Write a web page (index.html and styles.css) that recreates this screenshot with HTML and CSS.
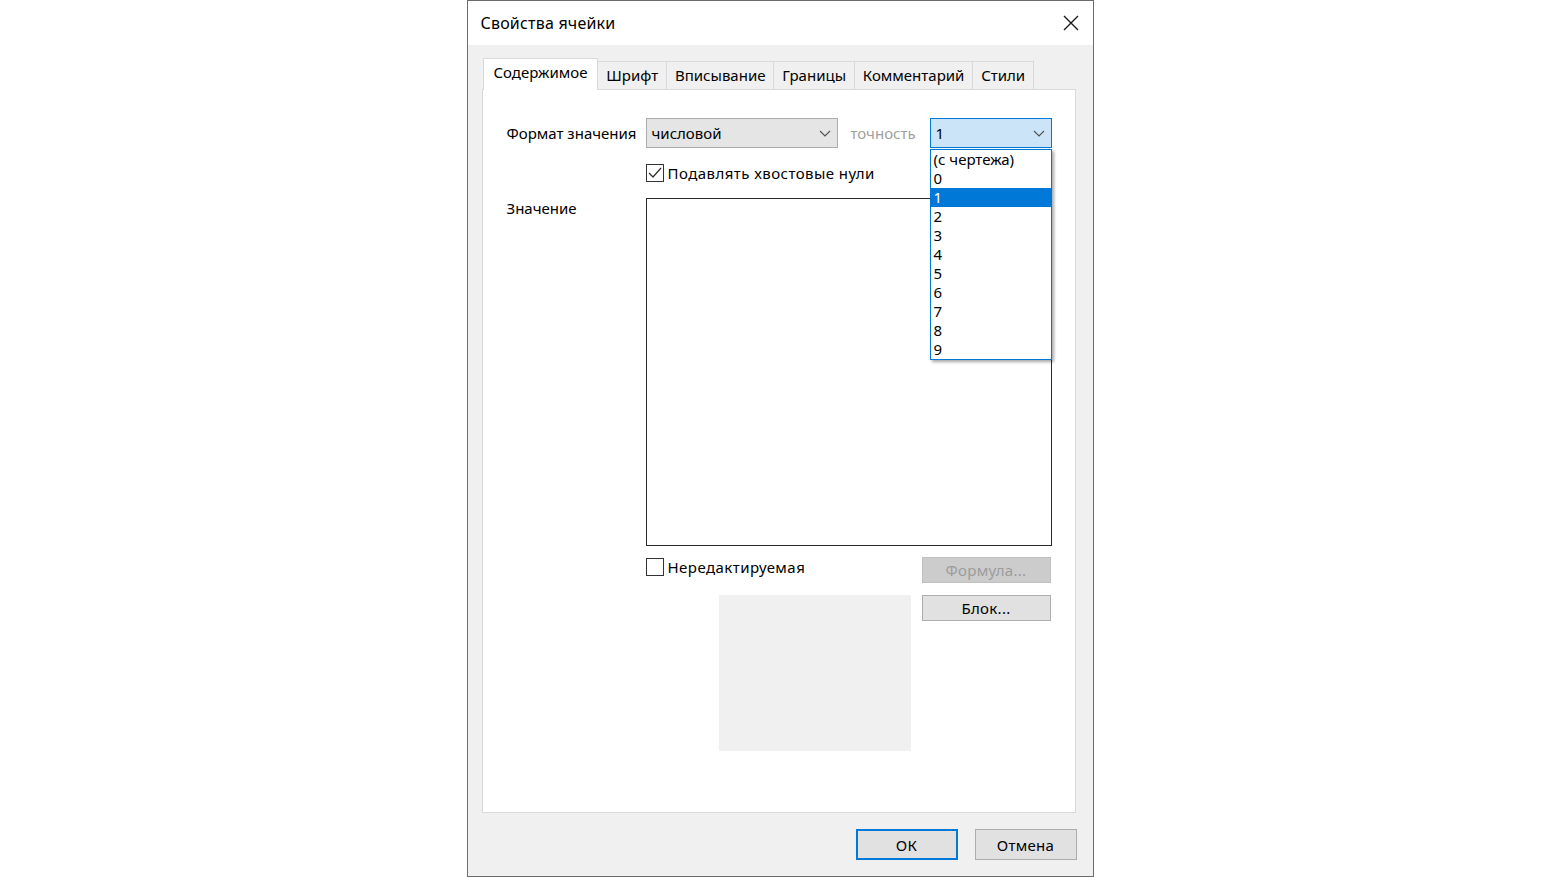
FILE: index.html
```html
<!DOCTYPE html>
<html lang="ru">
<head>
    <meta charset="UTF-8" />
    <title>Свойства ячейки</title>
    <link rel="stylesheet" href="styles.css">
</head>
<body>
    <div class="dialog">
        <div class="titlebar">
            <span class="title">Свойства ячейки</span>
            <button class="close" title="Закрыть">
                <svg width="16" height="16" viewBox="0 0 16 16">
                    <path d="M1 1 L15 15 M15 1 L1 15" stroke="#1a1a1a" stroke-width="1.4" fill="none"/>
                </svg>
            </button>
        </div>

        <div class="body">
            <div class="tabs">
                <div class="tab active">Содержимое</div>
                <div class="tab">Шрифт</div>
                <div class="tab">Вписывание</div>
                <div class="tab">Границы</div>
                <div class="tab">Комментарий</div>
                <div class="tab">Стили</div>
            </div>

            <div class="panel">
                <div class="row row-format">
                    <label class="label">Формат значения</label>
                    <div class="combo combo-format">
                        <span>числовой</span>
                        <svg class="chevron" width="12" height="7" viewBox="0 0 12 7">
                            <path d="M1 1 L6 6 L11 1" stroke="#555" stroke-width="1.2" fill="none"/>
                        </svg>
                    </div>
                    <span class="hint">точность</span>
                    <div class="combo-wrap">
                        <div class="combo combo-precision">
                            <span>1</span>
                            <svg class="chevron" width="12" height="7" viewBox="0 0 12 7">
                                <path d="M1 1 L6 6 L11 1" stroke="#555" stroke-width="1.2" fill="none"/>
                            </svg>
                        </div>
                        <ul class="dropdown">
                            <li>(с чертежа)</li>
                            <li>0</li>
                            <li class="selected">1</li>
                            <li>2</li>
                            <li>3</li>
                            <li>4</li>
                            <li>5</li>
                            <li>6</li>
                            <li>7</li>
                            <li>8</li>
                            <li>9</li>
                        </ul>
                    </div>
                </div>

                <div class="row row-check">
                    <span class="label"></span>
                    <label class="check">
                        <span class="box checked">
                            <svg width="14" height="12" viewBox="0 0 14 12">
                                <path d="M1 6 L5 10 L13 1" stroke="#333" stroke-width="1.3" fill="none"/>
                            </svg>
                        </span>
                        Подавлять хвостовые нули
                    </label>
                </div>

                <div class="row row-value">
                    <label class="label">Значение</label>
                    <div class="textarea"></div>
                </div>

                <div class="row row-options">
                    <span class="label"></span>
                    <label class="check">
                        <span class="box"></span>
                        Нередактируемая
                    </label>
                    <button class="btn disabled">Формула...</button>
                </div>

                <div class="row row-preview">
                    <span class="label"></span>
                    <div class="preview"></div>
                    <button class="btn">Блок...</button>
                </div>
            </div>

            <div class="footer">
                <button class="btn btn-dialog default">ОК</button>
                <button class="btn btn-dialog">Отмена</button>
            </div>
        </div>
    </div>
</body>
</html>
```

FILE: styles.css
```css
body {
    margin: 0;
    background: #fff;
    font-family: 'Noto Sans', 'Open Sans', sans-serif;
    color: #000;
}

.dialog {
    width: 625px;
    height: 875px;
    margin: 0 auto;
    border: 1px solid #6b6b6b;
    background: #f0f0f0;
    display: flex;
    flex-direction: column;
}

.titlebar {
    height: 44px;
    background: #fff;
    display: flex;
    align-items: center;
    justify-content: space-between;
    padding: 0 14px 0 13px;
}

.title {
    font-size: 16px;
    letter-spacing: 0.2px;
    color: #000;
}

.close {
    background: none;
    border: none;
    padding: 0;
    width: 16px;
    height: 16px;
    display: flex;
}

.body {
    flex: 1;
    padding: 14px 16px 0 14px;
    display: flex;
    flex-direction: column;
}

.tabs {
    display: flex;
    align-items: flex-end;
    height: 30px;
    padding-left: 1px;
    position: relative;
    z-index: 1;
}

.tab {
    height: 28px;
    padding: 0 7.9px;
    border: 1px solid #d9d9d9;
    border-bottom: none;
    margin-left: -1px;
    background: #f0f0f0;
    font-size: 15px;
    display: flex;
    align-items: center;
    box-sizing: border-box;
    line-height: 1;
}

.tab.active {
    height: 32px;
    margin-bottom: -1px;
    background: #fff;
    padding: 0 10px 4px;
    margin-left: 0;
}

.panel {
    height: 724px;
    box-sizing: border-box;
    border: 1px solid #d9d9d9;
    background: #fff;
    margin-right: 1px;
    padding: 28px 23px 0 24px;
    font-size: 15px;
}

.row {
    display: flex;
    align-items: center;
}

.label {
    width: 139px;
    flex-shrink: 0;
}

.combo {
    height: 30px;
    box-sizing: border-box;
    border: 1px solid #adadad;
    background: #e5e5e5;
    display: flex;
    align-items: center;
    justify-content: space-between;
    padding: 0 6px 0 5px;
}

.combo-format {
    width: 192px;
}

.hint {
    color: #a0a0a0;
    width: 79px;
    margin-left: 13px;
    flex-shrink: 0;
}

.combo-wrap {
    position: relative;
}

.combo-precision {
    width: 122px;
    border-color: #0078d7;
    background: #cce4f7;
}

.dropdown {
    position: absolute;
    top: 31px;
    left: 0;
    width: 122px;
    box-sizing: border-box;
    margin: 0;
    padding: 0;
    list-style: none;
    background: #fff;
    border: 1px solid #0078d7;
    box-shadow: 2px 2px 3px rgba(0, 0, 0, 0.35);
    z-index: 5;
}

.dropdown li {
    height: 19px;
    line-height: 19px;
    padding-left: 3px;
}

.dropdown li.selected {
    background: #0078d7;
    color: #fff;
}

.row-check {
    margin-top: 15px;
}

.check {
    display: flex;
    align-items: center;
    gap: 4px;
    letter-spacing: 0.45px;
}

.box {
    width: 18px;
    height: 18px;
    box-sizing: border-box;
    border: 1px solid #333;
    background: #fff;
    display: flex;
    align-items: center;
    justify-content: center;
}

.row-value {
    margin-top: 15px;
    align-items: flex-start;
}

.textarea {
    width: 406px;
    height: 348px;
    box-sizing: border-box;
    border: 1px solid #2b2b2b;
    background: #fff;
}

.row-options {
    margin-top: 11px;
    align-items: flex-start;
}

.row-options .check {
    flex: 1;
}

.btn {
    width: 129px;
    height: 26px;
    box-sizing: border-box;
    border: 1px solid #adadad;
    background: #e1e1e1;
    font-family: inherit;
    font-size: 15px;
    letter-spacing: 0.3px;
    color: #000;
    padding: 0;
    flex-shrink: 0;
}

.btn.disabled {
    background: #cccccc;
    border-color: #bfbfbf;
    color: #9c9c9c;
    margin-right: 1px;
}

.row-preview {
    margin-top: 12px;
    align-items: flex-start;
}

.preview {
    width: 192px;
    height: 156px;
    background: #f0f0f0;
    margin: 0 11px 0 73px;
}

.footer {
    display: flex;
    justify-content: flex-end;
    gap: 17px;
    padding-top: 16px;
}

.btn-dialog {
    width: 102px;
    height: 31px;
}

.btn-dialog.default {
    border: 2px solid #0078d7;
}
```
